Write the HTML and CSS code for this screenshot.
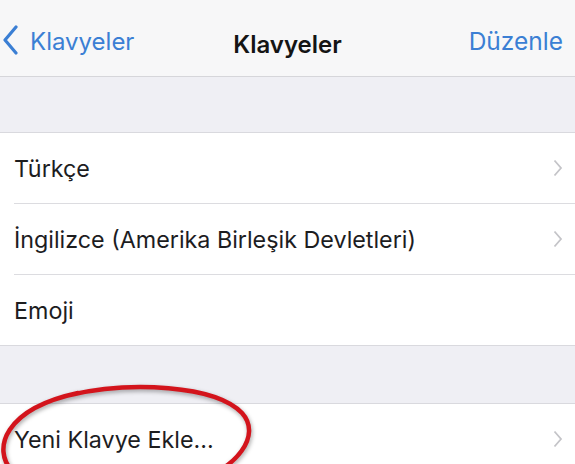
FILE: index.html
```html
<!DOCTYPE html>
<html lang="tr">
<head>
  <meta charset="UTF-8" />
  <title>Klavyeler</title>
  <link rel="stylesheet" href="styles.css">
</head>
<body>

<header class="nav-bar">
  <a class="nav-back" href="#">
    <svg class="back-chevron" width="16" height="32" viewBox="0 0 16 32">
      <polyline points="14,3 3,16 14,29" fill="none" stroke="#3b7fd4" stroke-width="3.2" stroke-linecap="round" stroke-linejoin="round" />
    </svg>
    <span>Klavyeler</span>
  </a>
  <div class="nav-title">Klavyeler</div>
  <a class="nav-action" href="#">Düzenle</a>
</header>

<div class="group-gap first-gap"></div>

<ul class="table-group">
  <li class="cell">
    <span class="cell-label">Türkçe</span>
    <svg class="disclosure" width="10" height="18" viewBox="0 0 10 18"><polyline points="1.5,1.5 8,9 1.5,16.5" fill="none" stroke="#c4c4c8" stroke-width="1.8" /></svg>
  </li>
  <li class="cell">
    <span class="cell-label">İngilizce (Amerika Birleşik Devletleri)</span>
    <svg class="disclosure" width="10" height="18" viewBox="0 0 10 18"><polyline points="1.5,1.5 8,9 1.5,16.5" fill="none" stroke="#c4c4c8" stroke-width="1.8" /></svg>
  </li>
  <li class="cell">
    <span class="cell-label">Emoji</span>
  </li>
</ul>

<div class="group-gap"></div>

<ul class="table-group">
  <li class="cell">
    <span class="cell-label">Yeni Klavye Ekle...</span>
    <svg class="disclosure" width="10" height="18" viewBox="0 0 10 18"><polyline points="1.5,1.5 8,9 1.5,16.5" fill="none" stroke="#c4c4c8" stroke-width="1.8" /></svg>
    <!-- hand drawn red mark around the row -->
    <svg class="red-circle" width="262" height="120" viewBox="0 0 262 120">
      <path d="M70,12 C130,-2 215,2 242,30 C262,52 238,86 190,100 C130,116 40,112 12,88 C-8,66 4,26 78,10" fill="none" stroke="#d3141c" stroke-width="4.5" stroke-linecap="round" />
    </svg>
  </li>
</ul>

</body>
</html>
```

FILE: styles.css
```css
body {
  margin: 0;
  background: #efeff4;
  font-family: Inter, "Noto Sans", sans-serif;
  color: #1d1d1f;
  overflow: hidden;
}

a {
  text-decoration: none;
}

.nav-bar {
  height: 77px;
  box-sizing: border-box;
  padding: 6px 12px 0 2px;
  background: #f7f7f8;
  border-bottom: 1px solid #d6d6da;
  display: flex;
  align-items: center;
  justify-content: space-between;
  position: relative;
}

.nav-back {
  display: flex;
  align-items: center;
  gap: 12px;
  color: #3b7fd4;
  font-size: 24px;
}

.back-chevron {
  margin-top: -2px;
}

.nav-title {
  position: absolute;
  left: 0;
  right: 0;
  padding-top: 6px;
  text-align: center;
  font-size: 24px;
  font-weight: 600;
  color: #141414;
  pointer-events: none;
}

.nav-action {
  color: #3b7fd4;
  font-size: 24.5px;
}

.group-gap {
  height: 57px;
}

.first-gap {
  height: 55px;
}

.table-group {
  list-style: none;
  margin: 0;
  padding: 0;
  background: #fff;
  border-top: 1px solid #d9d9de;
  border-bottom: 1px solid #d9d9de;
}

.cell {
  height: 70px;
  margin-left: 14px;
  padding-right: 12px;
  display: flex;
  align-items: center;
  justify-content: space-between;
  border-bottom: 1px solid #dcdce0;
  position: relative;
}

.cell:last-child {
  border-bottom: none;
}

.cell-label {
  font-size: 23.3px;
}

.red-circle {
  position: absolute;
  left: -14px;
  top: -21px;
  filter: drop-shadow(1px 2px 2px rgba(0, 0, 0, 0.35));
}
```
